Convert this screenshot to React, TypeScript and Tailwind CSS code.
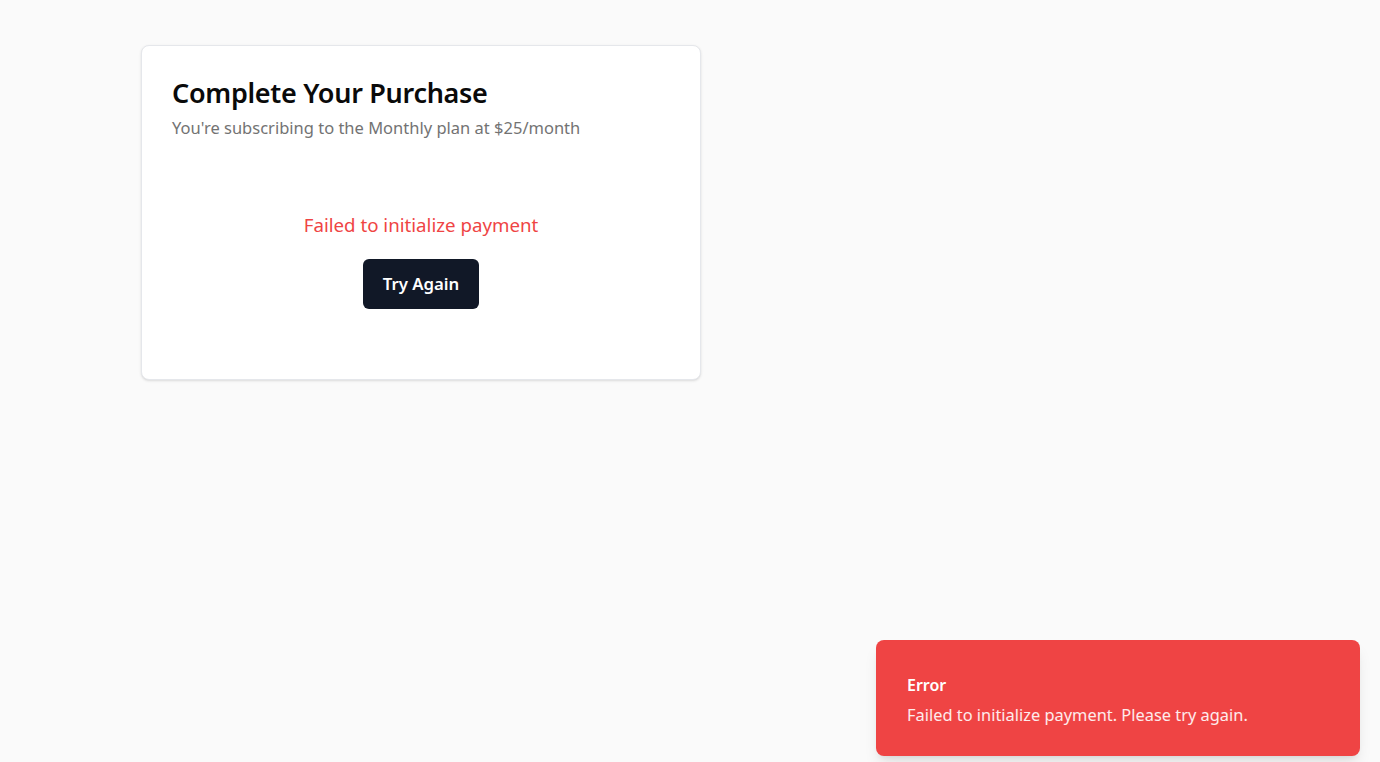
import React from "react";

export default function App() {
  return (
    <div
      className="min-h-screen w-full bg-[#fafafa] relative"
      style={{ fontFamily: '"Noto Sans", "Open Sans", sans-serif' }}
    >
      <div className="pt-[45px] pl-[141px]">
        <div className="w-[560px] h-[335px] bg-white border border-[#e5e7eb] rounded-[8px] shadow-sm flex flex-col">
          <div className="pt-[30px] px-[30px]">
            <h1 className="text-[27px] leading-[34px] font-semibold text-[#0a0a0a] tracking-[-0.3px]">
              Complete Your Purchase
            </h1>
            <p className="text-[16.5px] leading-[24px] text-[#737373] mt-[6px]">
              You're subscribing to the Monthly plan at $25/month
            </p>
          </div>
          <div className="flex flex-col items-center pt-[71px]">
            <p className="text-[18.7px] leading-[28px] text-[#ef4444]">
              Failed to initialize payment
            </p>
            <button className="mt-[20px] h-[50px] w-[116px] rounded-[6px] bg-[#111827] text-white text-[16.8px] font-semibold">
              Try Again
            </button>
          </div>
        </div>
      </div>

      <div className="absolute right-[20px] bottom-[6px] w-[484px] h-[116px] rounded-[8px] bg-[#ef4444] shadow-lg px-[31px] pt-[34px]">
        <div className="text-white text-[16px] leading-[22px] font-semibold">Error</div>
        <div className="text-white/90 text-[16.4px] leading-[24px] mt-[7px]">
          Failed to initialize payment. Please try again.
        </div>
      </div>
    </div>
  );
}
